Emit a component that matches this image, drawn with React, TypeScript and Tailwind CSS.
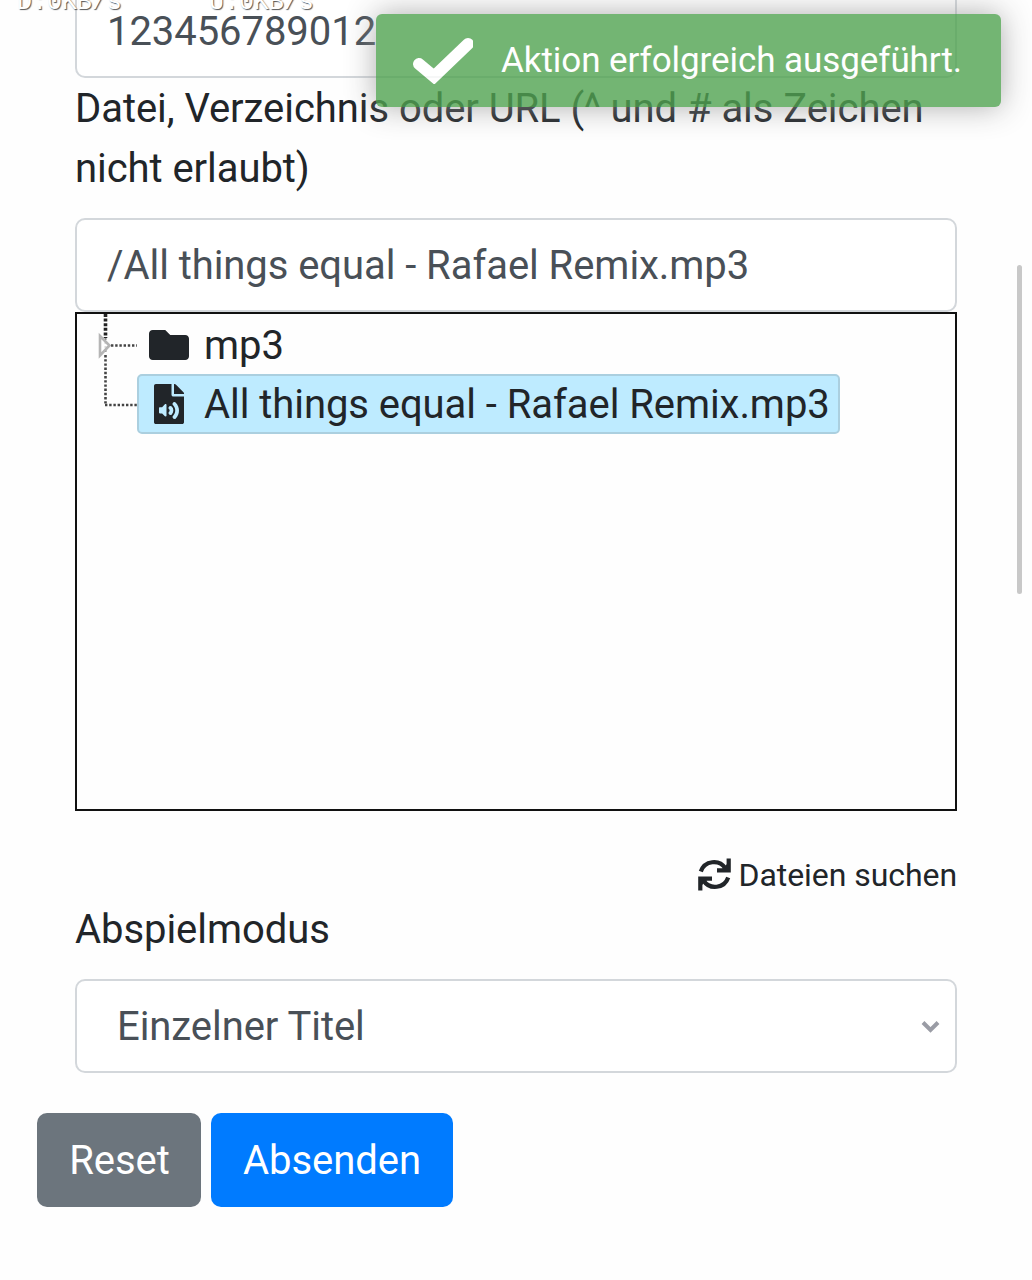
import type { ReactNode } from "react";
import { FaFileAudio, FaFolder } from "react-icons/fa";

function Field({ children }: { children: ReactNode }) {
  return (
    <div className="flex h-[94px] items-center rounded-[10px] border-2 border-[#d3d7db] bg-white pl-[30px] pt-[2px] text-[#495057]">
      {children}
    </div>
  );
}

function SpeedOverlay() {
  return (
    <div className="absolute left-[17px] top-[-13px] z-10 flex h-8 whitespace-pre text-[25px] leading-8 text-white [font-family:'Liberation_Mono',monospace] [text-shadow:1px_1px_1px_#555]">
      <span className="w-[192px]">D:0KB/s</span>
      <span>U:0KB/s</span>
    </div>
  );
}

function Toast() {
  return (
    <div className="absolute left-[376px] top-[14px] z-20 flex h-[93px] w-[625px] items-center rounded-[6px] bg-[#51a351] pl-[37px] text-[35px] tracking-[-0.07px] text-white opacity-80 shadow-[0_0_30px_#999]">
      <svg className="h-[46px] w-[60px] shrink-0" viewBox="0 0 60 46" fill="none">
        <path d="M6 26 L21 38.5 L55 6" stroke="white" strokeWidth="12" strokeLinecap="round" strokeLinejoin="miter" />
      </svg>
      <span className="ml-[28px] mt-px whitespace-nowrap">Aktion erfolgreich ausgeführt.</span>
    </div>
  );
}

function RefreshIcon() {
  return (
    <svg className="mb-[2px] mr-[-1px] size-[33px]" viewBox="0 0 33 33" fill="none" stroke="currentColor" strokeWidth="4.2">
      <path d="M2.8 13.5 A13.8 13.8 0 0 1 27.5 10.5" />
      <path d="M30.7 0.5 V12.4 H19" />
      <path d="M30.2 19.5 A13.8 13.8 0 0 1 5.5 22.5" />
      <path d="M2.3 32.5 V20.6 H14" />
      <path d="M30 5 V12 H23 Z M3 28 V21 H10 Z" fill="currentColor" stroke="none" />
    </svg>
  );
}

function FileTree() {
  return (
    <div className="relative h-[499px] border-2 border-[#111] pt-px">
      <svg className="absolute left-[20px] top-0 h-[100px] w-[42px]" viewBox="0 0 42 100" fill="none">
        <path d="M8.5 0 V24" stroke="#222" strokeWidth="3.6" strokeDasharray="3 1.6" />
        <path d="M8.5 41 V91" stroke="#444" strokeWidth="2.6" strokeDasharray="2.4 1.8" />
        <path d="M14 31.5 H40 M8 91 H40" stroke="#444" strokeWidth="2.6" strokeDasharray="2.4 1.8" />
        <path d="M8.5 24 V40" stroke="#888" strokeWidth="2" strokeDasharray="2 2" />
        <path d="M3 22 L12.5 31.5 L3 41.5 Z" fill="white" fillOpacity="0.7" stroke="#b5b5b5" strokeWidth="2.6" />
      </svg>
      <div className="flex h-[59px] items-center pl-[72px] text-[#212529]">
        <FaFolder className="size-10 shrink-0" />
        <span className="ml-[15px] mt-[2px]">mp3</span>
      </div>
      <div className="ml-[60px] flex h-[60px] w-[703px] items-center rounded-[5px] border-2 border-[#abcfdf] bg-[#beebff] pl-[10px] text-[#212529]">
        <FaFileAudio className="size-10 shrink-0" />
        <span className="ml-[15px] mt-[2px] whitespace-nowrap">All things equal - Rafael Remix.mp3</span>
      </div>
    </div>
  );
}

export default function App() {
  return (
    <div className="relative h-[1280px] w-[1032px] overflow-hidden bg-[#fefefe] text-[40px] leading-[60px] tracking-[-0.06px] text-[#212529] [font-family:Roboto,sans-serif]">
      <SpeedOverlay />
      <Toast />
      <main className="-mt-4 px-[75px]">
        <Field>123456789012</Field>
        <label className="mb-[19px] block pt-px">
          Datei, Verzeichnis oder URL (^ und # als Zeichen
          <br />
          nicht erlaubt)
        </label>
        <Field>/All things equal - Rafael Remix.mp3</Field>
        <FileTree />
        <div className="mt-10 flex h-12 items-center justify-end gap-2 text-[32px]">
          <RefreshIcon />
          <span>Dateien suchen</span>
        </div>
        <label className="mb-[19px] block pt-px">Abspielmodus</label>
        <Field>
          <span className="ml-[10px]">Einzelner Titel</span>
          <svg className="ml-auto mr-[15px] h-[14px] w-[19px]" viewBox="0 0 19 14" fill="none">
            <path d="M2 2.5 L9.5 10 L17 2.5" stroke="#9a9ca5" strokeWidth="4" />
          </svg>
        </Field>
      </main>
      <div className="mt-10 flex gap-[10px] pl-[37px] text-white">
        <button className="h-[94px] w-[164px] rounded-[10px] bg-[#6c757d] pl-px pt-px">Reset</button>
        <button className="h-[94px] w-[242px] rounded-[10px] bg-[#007bff] pt-px">Absenden</button>
      </div>
      <div className="absolute left-[1017px] top-[265px] h-[329px] w-[5px] rounded-full bg-[#c8c8c8]" />
    </div>
  );
}
